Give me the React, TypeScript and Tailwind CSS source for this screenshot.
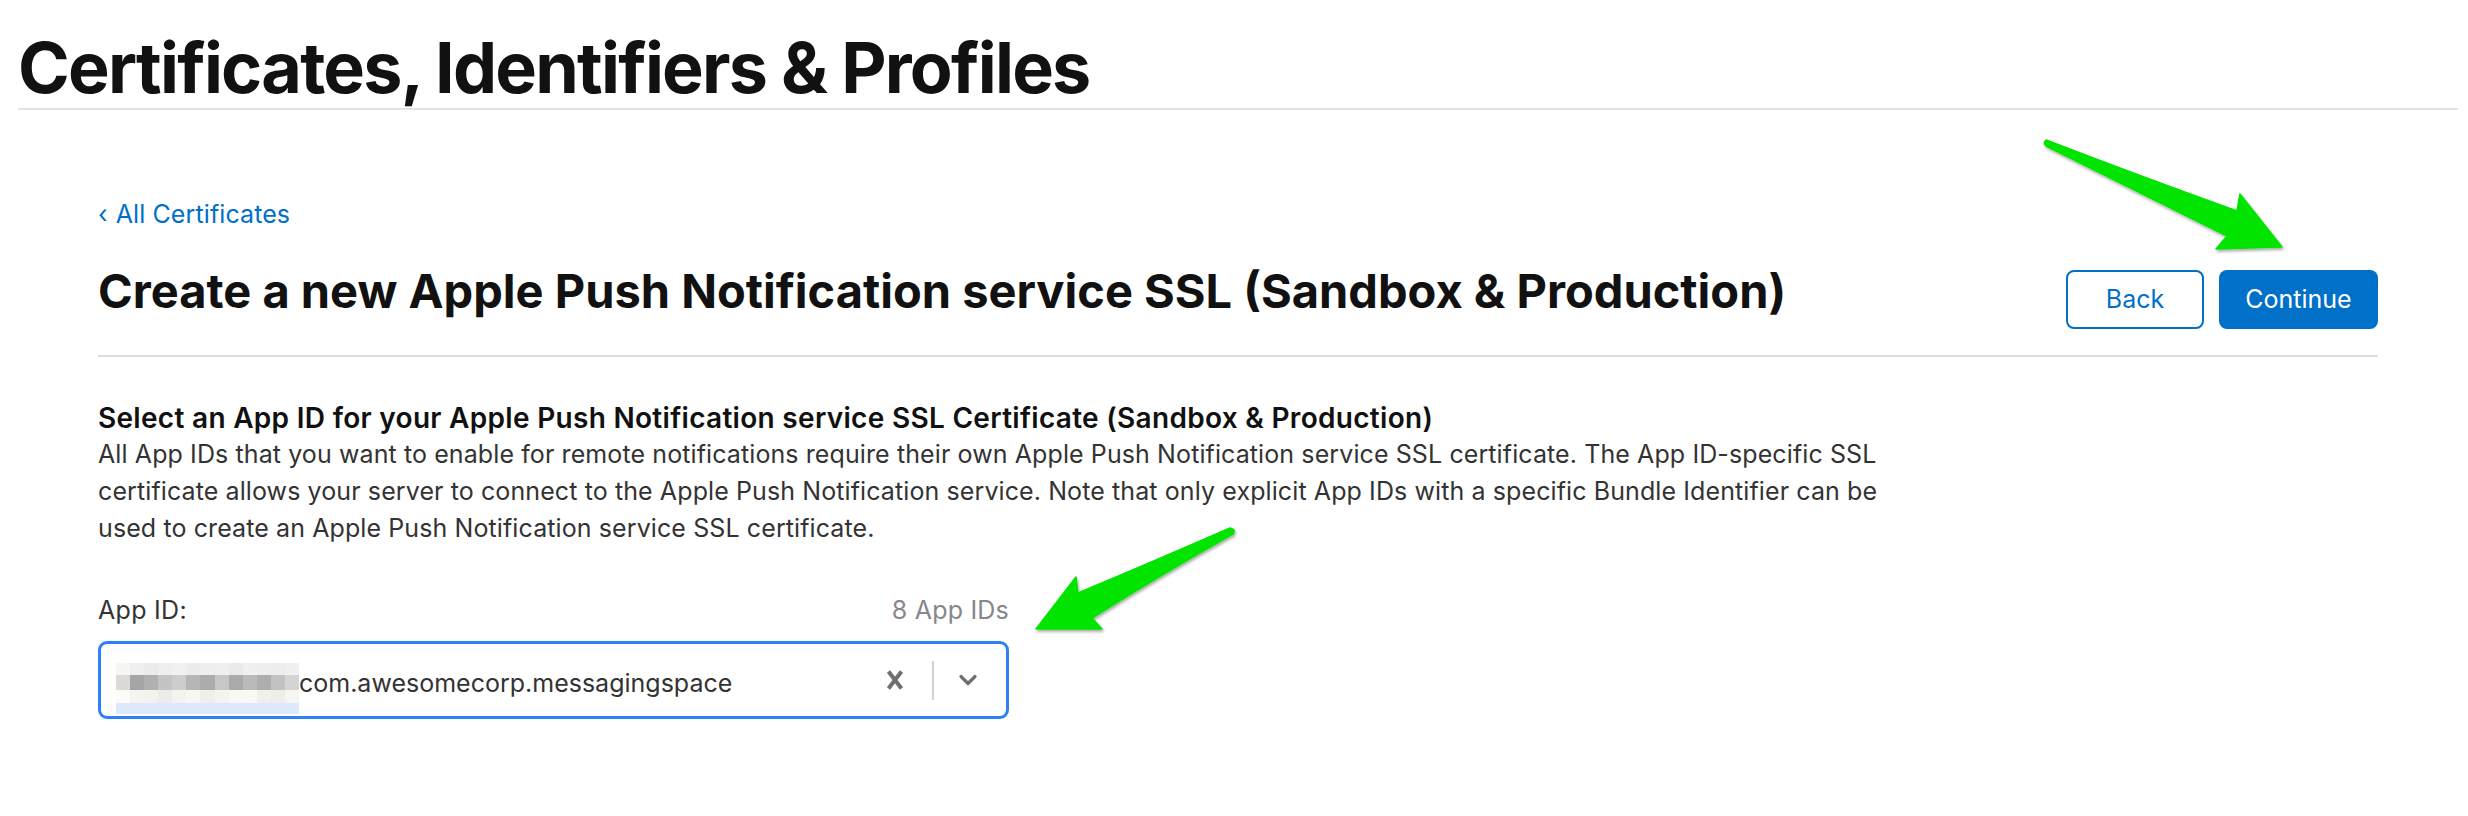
import React from "react";

const row1 = ["#f6f5f2","#efefef","#ebebeb","#efefef","#f1f1f1","#ececec","#eeeeee","#efefef","#eaeaea","#f0f0f0","#eeeeee","#ededed","#f0f0f0"];
const row2 = ["#dcdad6","#a5a5a7","#b0b0b0","#c4c4c4","#cdcdcd","#b6b6b6","#acacac","#c7c7c7","#aaaaaa","#bababa","#aeaeae","#c2c2c2","#d4d4d4"];
const row3 = ["#fcfbf6","#f6f4ef","#f3f2ef","#ececec","#f5f3ef","#f8f6f2","#f1efec","#f6f4f0","#faf8f4","#fbf9f5","#f2f0ec","#efedea","#f7f5f2"];

function Blur() {
  return (
    <div className="flex flex-col w-[183px] shrink-0">
      <div className="flex h-[12px]">
        {row1.map((c, i) => (
          <div key={i} className="flex-1" style={{ background: c }} />
        ))}
      </div>
      <div className="flex h-[15px]">
        {row2.map((c, i) => (
          <div key={i} className="flex-1" style={{ background: c }} />
        ))}
      </div>
      <div className="flex h-[13px]">
        {row3.map((c, i) => (
          <div key={i} className="flex-1" style={{ background: c }} />
        ))}
      </div>
      <div className="h-[11px] bg-[#dde9fb]" />
    </div>
  );
}

export default function App() {
  return (
    <div
      className="relative w-[2468px] h-[816px] bg-white overflow-hidden text-[#1d1d1f]"
      style={{ fontFamily: "Inter, 'Noto Sans', sans-serif" }}
    >
      <header className="ml-[18px] mr-[10px] pt-[28px] border-b-2 border-[#e4e4e4]">
        <h1 className="text-[70px] leading-[80px] font-bold tracking-[-1.75px] text-[#111]">
          Certificates, Identifiers &amp; Profiles
        </h1>
      </header>

      <main className="ml-[98px] mr-[90px]">
        <a className="mt-[89px] block text-[25px] leading-[30px] tracking-[0.1px] text-[#0070c9]">
          <span className="mr-[8px]">‹</span>All Certificates
        </a>

        <div className="mt-[35px] flex items-start justify-between pb-[26px] border-b-2 border-[#dcdcdc]">
          <h2 className="text-[47px] leading-[54px] font-bold tracking-[0px] text-[#111]">
            Create a new Apple Push Notification service SSL (Sandbox &amp; Production)
          </h2>
          <div className="mt-[6px] flex gap-[15px]">
            <button className="w-[138px] h-[59px] rounded-[8px] border-2 border-[#0070c9] bg-white text-[25px] text-[#0070c9]">
              Back
            </button>
            <button className="w-[159px] h-[59px] rounded-[8px] bg-[#0070c9] text-[25px] text-white">
              Continue
            </button>
          </div>
        </div>

        <h3 className="mt-[44px] text-[28px] leading-[35px] font-semibold tracking-[0.3px] text-[#111]">
          Select an App ID for your Apple Push Notification service SSL Certificate (Sandbox &amp; Production)
        </h3>
        <p className="text-[25px] leading-[37px] tracking-[0.1px] text-[#333]">
          <span className="block">
            All App IDs that you want to enable for remote notifications require their own Apple Push Notification service SSL certificate. The App ID-specific SSL
          </span>
          <span className="block">
            certificate allows your server to connect to the Apple Push Notification service. Note that only explicit App IDs with a specific Bundle Identifier can be
          </span>
          <span className="block">used to create an Apple Push Notification service SSL certificate.</span>
        </p>

        <div className="mt-[48px] w-[911px]">
          <div className="flex justify-between text-[25px] leading-[30px]">
            <span className="text-[#333] tracking-[0.3px]">App ID:</span>
            <span className="text-[#86868b] tracking-[0.2px]">8 App IDs</span>
          </div>
          <div className="mt-[16px] h-[78px] rounded-[9px] border-[3px] border-[#2f80f6] flex items-start pl-[15px] pr-[28px]">
            <div className="mt-[19px]">
              <Blur />
            </div>
            <span className="mt-[24px] text-[25px] leading-[30px] text-[#333]">
              com.awesomecorp.messagingspace
            </span>
            <div className="ml-auto flex items-center h-full">
              <svg width="20" height="22" viewBox="0 0 20 22" className="mr-[27px]">
                <path d="M3.5 2.5 L16.5 19.5 M16.5 2.5 L3.5 19.5" stroke="#6e6e73" strokeWidth="4" />
              </svg>
              <div className="w-[2px] h-[39px] bg-[#d2d2d7]" />
              <svg width="20" height="12" viewBox="0 0 20 12" className="ml-[24px]">
                <path d="M3 2.5 L10 9.5 L17 2.5" stroke="#6e6e73" strokeWidth="3.2" fill="none" strokeLinecap="round" strokeLinejoin="round" />
              </svg>
            </div>
          </div>
        </div>
      </main>

      <svg
        className="absolute left-0 top-0 pointer-events-none"
        width="2468"
        height="816"
        viewBox="0 0 2468 816"
      >
        <defs>
          <filter id="sh" x="-20%" y="-20%" width="140%" height="140%">
            <feDropShadow dx="1" dy="2" stdDeviation="1.5" floodColor="#000" floodOpacity="0.35" />
          </filter>
        </defs>
        <g filter="url(#sh)" fill="#00e400" stroke="#00e400" strokeWidth="1.5" strokeLinejoin="round">
          <path d="M2046 140 Q2145 178 2237 211 L2240 194 L2282 247 L2216 249 L2227 236 Q2135 190 2048 147 Q2042 144 2046 140 Z" />
          <path d="M1230 528 Q1150 563 1078 593 L1076 577 L1036 629 L1102 629 L1092 618 Q1165 572 1233 534 Q1237 530 1230 528 Z" />
        </g>
      </svg>
    </div>
  );
}
